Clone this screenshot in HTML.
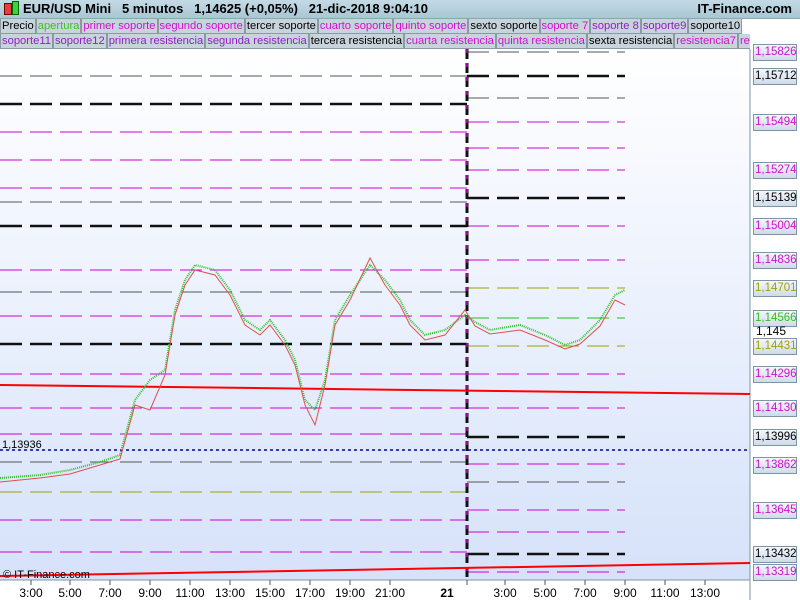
<!DOCTYPE html><html><head><style>
body{margin:0;width:800px;height:600px;overflow:hidden;font-family:"Liberation Sans",sans-serif;background:#fff;position:relative}
.hdr{position:absolute;left:0;top:0;width:800px;height:18px;background:linear-gradient(#c4dbe6,#a9c6d4);font-size:13px;font-weight:bold;line-height:18px;border-bottom:1px solid #8aa}
.row{position:absolute;left:0;height:15px;display:flex;font-size:11.2px;line-height:14px;overflow:hidden}
.row span{background:#c8d4dc;border:1px solid #8a9aa4;border-top:none;padding:0 1px;white-space:nowrap;flex:none}
.m{color:#d010d0}.p{color:#9020c0}
.lab{position:absolute;left:753px;width:40px;font-size:11.5px;height:15px;line-height:15px;padding:0 1px;border:1px solid #7d96a6;background:linear-gradient(#f4f7fb,#cfdaea)}
</style></head><body>
<div class="hdr"><span style="position:absolute;left:4px;top:3px;width:6px;height:10px;background:#e04040;border:1px solid #700"></span><span style="position:absolute;left:12px;top:1px;width:5px;height:12px;background:#40d040;border:1px solid #060"></span><span style="position:absolute;left:23px">EUR/USD Mini&nbsp;&nbsp;&nbsp;5 minutos&nbsp;&nbsp;&nbsp;1,14625 (+0,05%)&nbsp;&nbsp;&nbsp;21-dic-2018 9:04:10</span><span style="position:absolute;right:8px">IT-Finance.com</span></div>
<div class="row" style="top:19px;width:744px"><span>Precio</span><span style="color:#40c020">apertura</span><span class="m">primer soporte</span><span class="m">segundo soporte</span><span>tercer soporte</span><span class="m">cuarto soporte</span><span class="m">quinto soporte</span><span>sexto soporte</span><span class="m">soporte 7</span><span class="p">soporte 8</span><span class="p">soporte9</span><span>soporte10</span></div>
<div class="row" style="top:34px;width:750px"><span class="p">soporte11</span><span class="p">soporte12</span><span class="p">primera resistencia</span><span class="p">segunda resistencia</span><span>tercera resistencia</span><span class="m">cuarta resistencia</span><span class="m">quinta resistencia</span><span>sexta resistencia</span><span class="m">resistencia7</span><span class="m">re</span></div>
<svg style="position:absolute;left:0;top:0" width="800" height="600">
<defs><linearGradient id="g" x1="0" y1="0" x2="0" y2="1"><stop offset="0" stop-color="#fff"/><stop offset="1" stop-color="#d6e2fa"/></linearGradient></defs>
<rect x="0" y="49" width="750" height="531" fill="url(#g)"/>
<line x1="750" y1="49" x2="750" y2="600" stroke="#7d96a6"/>
<line x1="0" y1="580" x2="750" y2="580" stroke="#7d96a6"/>
<g fill="none" stroke-dasharray="22,8">
<g stroke="#555" stroke-width="1"><path d="M0 76H467M0 202H467M0 292H467M0 462H467M467 52H625M467 98H625M467 482H625"/></g>
<g stroke="#111" stroke-width="2.5"><path d="M0 104H467M0 226H467M0 344H467M467 76H625M467 198H625M467 437H625M467 554H625"/></g>
<g stroke="#d000d0" stroke-width="1"><path d="M0 132H467M0 160H467M0 188H467M0 270H467M0 316H467M0 374H467M0 408H467M0 434H467M0 520H467M0 552H467M467 122H625M467 148H625M467 170H625M467 226H625M467 260H625M467 374H625M467 408H625M467 464H625M467 510H625M467 532H625M467 572H625"/></g>
<g stroke="#a0a000"><path d="M0 492H467M467 288H625M467 346H625"/></g>
<path stroke="#20c020" d="M467 318H625"/>
</g>
<path d="M467 49V580" stroke="#111" stroke-width="3" stroke-dasharray="10,4"/>
<path d="M467 49V580" stroke="#d000d0" stroke-width="1.5" stroke-dasharray="4,10"/>
<line x1="0" y1="450" x2="750" y2="450" stroke="#0000a0" stroke-width="1.5" stroke-dasharray="3,3"/>
<line x1="0" y1="385" x2="750" y2="394" stroke="#f00" stroke-width="2"/>
<line x1="0" y1="576" x2="750" y2="563" stroke="#f00" stroke-width="2"/>
<polyline fill="none" stroke="#30c030" stroke-width="2" stroke-dasharray="1,1" points="0,478 40,475 70,470 100,462 120,455 135,400 150,380 165,370 175,310 185,280 195,265 215,270 230,290 245,320 260,330 270,320 285,340 295,360 305,400 315,410 325,380 335,320 350,295 370,265 385,280 400,300 410,320 425,335 445,330 465,315 475,322 490,330 520,325 545,335 565,345 580,340 600,320 615,295 625,290"/>
<polyline fill="none" stroke="#e05050" stroke-width="1" points="0,482 40,478 70,474 100,465 120,459 135,405 150,410 165,375 175,315 185,285 195,270 215,275 230,295 245,325 260,335 270,325 285,345 295,365 305,405 315,425 325,385 335,325 350,300 370,258 385,285 400,305 410,325 425,340 445,335 465,310 475,326 490,334 520,330 545,340 565,349 580,344 600,326 615,300 625,305"/>
<text x="2" y="448" font-size="11" fill="#000">1,13936</text>
<text x="3" y="578" font-size="11" fill="#000">© IT-Finance.com</text>
<g stroke="#555"><path d="M31 580v5M70 580v5M110 580v5M150 580v5M190 580v5M230 580v5M270 580v5M310 580v5M350 580v5M390 580v5M467 580v5M505 580v5M545 580v5M585 580v5M625 580v5M665 580v5M705 580v5"/></g>
<g font-size="12" text-anchor="middle"><text x="31" y="597">3:00</text><text x="70" y="597">5:00</text><text x="110" y="597">7:00</text><text x="150" y="597">9:00</text><text x="190" y="597">11:00</text><text x="230" y="597">13:00</text><text x="270" y="597">15:00</text><text x="310" y="597">17:00</text><text x="350" y="597">19:00</text><text x="390" y="597">21:00</text><text x="447" y="597" font-weight="bold">21</text><text x="505" y="597">3:00</text><text x="545" y="597">5:00</text><text x="585" y="597">7:00</text><text x="625" y="597">9:00</text><text x="665" y="597">11:00</text><text x="705" y="597">13:00</text></g>
</svg>
<div class="lab m" style="top:44px">1,15826</div>
<div class="lab" style="top:68px">1,15712</div>
<div class="lab m" style="top:114px">1,15494</div>
<div class="lab m" style="top:162px">1,15274</div>
<div class="lab" style="top:190px">1,15139</div>
<div class="lab m" style="top:218px">1,15004</div>
<div class="lab m" style="top:252px">1,14836</div>
<div class="lab" style="top:280px;color:#a0a000">1,14701</div>
<div class="lab" style="top:310px;color:#30c020">1,14566</div>
<div style="position:absolute;left:756px;top:324px;font-size:12px">1,145</div>
<div class="lab" style="top:338px;color:#a0a000">1,14431</div>
<div class="lab m" style="top:366px">1,14296</div>
<div class="lab m" style="top:400px">1,14130</div>
<div class="lab" style="top:429px">1,13996</div>
<div class="lab m" style="top:457px">1,13862</div>
<div class="lab m" style="top:502px">1,13645</div>
<div class="lab" style="top:546px">1,13432</div>
<div class="lab m" style="top:564px">1,13319</div>
</body></html>
